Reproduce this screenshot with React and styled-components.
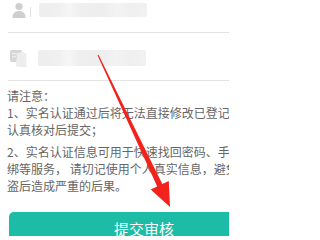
import React from "react";
import styled, { createGlobalStyle } from "styled-components";

const Global = createGlobalStyle`
  html, body { margin: 0; padding: 0; background: #fff; overflow: hidden; }
  body { font-family: "Noto Sans CJK SC", "Noto Sans", sans-serif; }
`;

const Frame = styled.div`
  width: 229px;
  height: 236px;
  overflow: hidden;
  position: relative;
`;

const Page = styled.div`
  position: relative;
  width: 288px;
  margin-top: -15px;
  background: #fff;
`;

const Row = styled.div`
  margin-left: 8px;
  border-bottom: 1px solid #e3e3e3;
  display: flex;
  align-items: center;
  padding-top: 3px;
  height: 44px;
`;

const IconBox = styled.div`
  width: 20px;
  height: 20px;
  display: flex;
  align-items: center;
  justify-content: center;
  margin-left: ${(p) => p.$ml}px;
`;

const Sep = styled.div`
  width: 1px;
  height: 10px;
  background: #e2e2e2;
  margin-left: 1px;
  margin-top: 4px;
`;

const Blur = styled.div`
  margin-left: ${(p) => p.$ml}px;
  width: 108px;
  height: ${(p) => p.$h}px;
  border-radius: 2px;
  background: linear-gradient(
    90deg,
    #eeeeee 0%,
    #f0f0f0 20%,
    #f6f6f6 28%,
    #efefef 38%,
    #eeeeee 60%,
    #f3f3f3 72%,
    #efefef 85%,
    #f1f1f1 100%
  );
`;

const Notice = styled.div`
  padding: 6px 0 0 7px;
  font-size: 12px;
  line-height: 17px;
  color: #666;
`;

const Para = styled.div`
  margin-top: ${(p) => p.$mt || 0}px;
`;

const Line = styled.div`
  white-space: nowrap;
`;

const Submit = styled.button`
  display: flex;
  align-items: center;
  justify-content: center;
  margin: 18px 9px 0 9px;
  width: calc(100% - 18px);
  height: 40px;
  border: none;
  border-radius: 5px;
  background: #1cbca6;
  color: #fff;
  font-family: "Noto Sans CJK SC", "Noto Sans", sans-serif;
  font-size: 15px;
  padding: 0 0 8px 0;
`;

const Arrow = styled.svg`
  position: absolute;
  left: 0;
  top: 15px;
  pointer-events: none;
`;

function PersonIcon() {
  return (
    <svg width="16" height="16" viewBox="0 0 16 16">
      <circle cx="8" cy="4.5" r="3.6" fill="#cfcfcf" />
      <path d="M1.5 16 C1.5 11 4 9 8 9 C12 9 14.5 11 14.5 16 Z" fill="#cfcfcf" />
    </svg>
  );
}

function CardIcon() {
  return (
    <svg width="19" height="19" viewBox="0 0 19 19">
      <rect x="1" y="1" width="12" height="12" rx="1.5" fill="#d6d6d6" />
      <rect x="3" y="4" width="6" height="1.4" fill="#ececec" />
      <rect x="3" y="7" width="4" height="1.4" fill="#ececec" />
      <path d="M8 5 C11 2.5 16 3 17.5 5 L17.5 18 L9 18 C7.8 18 7 17 7 16 Z" fill="#ededed" />
    </svg>
  );
}

export default function App() {
  const x1 = 98, y1 = 55, x2 = 170, y2 = 207;
  const dx = x2 - x1, dy = y2 - y1;
  const len = Math.hypot(dx, dy);
  const ux = dx / len, uy = dy / len;
  const px = uy, py = -ux;
  const head = 24, hw = 10;
  const bx = x2 - ux * head, by = y2 - uy * head;
  const s0 = 0.6, s1 = 2.8;
  const pts = [
    [x1 + px * s0, y1 + py * s0],
    [bx + px * s1, by + py * s1],
    [bx + px * hw, by + py * hw],
    [x2, y2],
    [bx - px * hw, by - py * hw],
    [bx - px * s1, by - py * s1],
    [x1 - px * s0, y1 - py * s0],
  ]
    .map((p) => p.map((v) => v.toFixed(1)).join(","))
    .join(" ");

  return (
    <>
      <Global />
      <Frame>
        <Page>
          <Row>
            <IconBox $ml={1}>
              <PersonIcon />
            </IconBox>
            <Sep />
            <Blur $ml={8} $h={14} />
          </Row>
          <Row>
            <IconBox $ml={0}>
              <CardIcon />
            </IconBox>
            <Blur $ml={10} $h={16} />
          </Row>
          <Notice>
            <Para>
              <Line>请注意：</Line>
              <Line>1、实名认证通过后将无法直接修改已登记信息，请</Line>
              <Line>认真核对后提交；</Line>
            </Para>
            <Para $mt={5}>
              <Line>2、实名认证信息可用于快速找回密码、手机号换</Line>
              <Line>绑等服务， 请切记使用个人真实信息，避免账号被</Line>
              <Line>盗后造成严重的后果。</Line>
            </Para>
          </Notice>
          <Submit>提交审核</Submit>
          <Arrow width="288" height="240" viewBox="0 0 288 240">
            <polygon points={pts} fill="#f2231c" />
          </Arrow>
        </Page>
      </Frame>
    </>
  );
}
